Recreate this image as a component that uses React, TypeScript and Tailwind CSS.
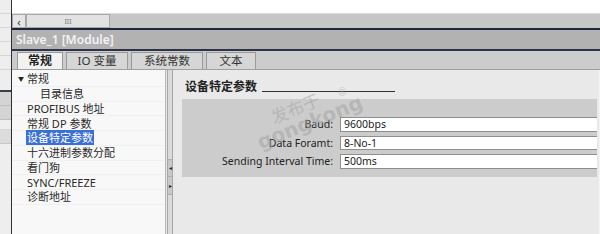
import React from "react";

const treeItems = [
  { label: "常规", indent: false, caret: true },
  { label: "目录信息", indent: true },
  { label: "PROFIBUS 地址" },
  { label: "常规 DP 参数" },
  { label: "设备特定参数", selected: true },
  { label: "十六进制参数分配" },
  { label: "看门狗" },
  { label: "SYNC/FREEZE" },
  { label: "诊断地址" },
];

const fields = [
  { label: "Baud:", value: "9600bps" },
  { label: "Data Foramt:", value: "8-No-1" },
  { label: "Sending Interval Time:", value: "500ms" },
];

const tabs = ["常规", "IO 变量", "系统常数", "文本"];

export default function App() {
  return (
    <div
      className="relative w-[600px] h-[234px] overflow-hidden bg-white flex text-[#222]"
      style={{ fontFamily: '"Noto Sans", "Noto Sans CJK SC", sans-serif' }}
    >
      {/* window behind, left edge */}
      <div className="w-[11px] h-full flex flex-col bg-[#eeeeee]">
        <div className="h-[14px] border-b border-[#d6d6d6]" />
        <div className="h-[14px] border-b border-[#d6d6d6]" />
        <div className="h-[14px] border-b border-[#d6d6d6]" />
        <div className="h-[14px] border-b border-[#d6d6d6]" />
        <div className="h-[14px] border-b border-[#d6d6d6]" />
        <div className="h-[22px] border-b-2 border-[#3a3f4c]" />
        <div className="h-[14px] bg-[#d4d4d4] border-b border-[#c0c0c0]" />
        <div className="h-[14px] bg-[#d4d4d4] border-b border-[#c0c0c0]" />
        <div className="h-[10px] border-b border-[#d6d6d6]" />
        <div className="h-[14px] bg-[#dcdcdc] border-b border-[#c8c8c8]" />
        <div className="flex-1" />
      </div>
      <div className="w-[1px] h-full bg-[#2a2f3a]" />

      <div className="flex-1 flex flex-col">
        <div className="h-[13px] bg-white" />
        {/* horizontal scrollbar */}
        <div className="h-[15px] bg-[#c6c6c6] flex items-stretch border-t border-[#dcdcdc]">
          <div className="w-[14px] bg-[#e6e6e6] border border-[#a8a8a8] flex items-center justify-center text-[11px] leading-none text-[#333]">
            ‹
          </div>
          <div className="w-[84px] bg-[#e2e2e2] border border-[#a8a8a8] flex items-center justify-center text-[7px] leading-none text-[#777]">
            III
          </div>
        </div>
        <div className="h-[2px] bg-[#20263a]" />
        {/* title bar */}
        <div className="h-[19px] bg-[#b2b2b2] flex items-center pl-[4px]">
          <span className="text-[12px] font-semibold text-[#f2f2f2] leading-none">
            Slave_1 [Module]
          </span>
        </div>
        <div className="h-[2px] bg-[#2c3346]" />
        {/* tabs */}
        <div className="h-[19px] bg-[#cccccc] flex items-end pl-[5px] gap-[3px] border-b border-[#a0a0a0]">
          {tabs.map((t, i) => (
            <div
              key={t}
              className={
                i === 0
                  ? "w-[46px] h-[17px] bg-[#f2f2f2] border border-b-0 border-[#9a9a9a] flex items-center justify-center text-[12px] font-bold leading-none"
                  : i === 1
                  ? "w-[62px] h-[17px] bg-[#d6d6d6] border border-b-0 border-[#9a9a9a] flex items-center justify-center text-[11.5px] text-[#333] leading-none"
                  : i === 2
                  ? "w-[72px] h-[17px] bg-[#d6d6d6] border border-b-0 border-[#9a9a9a] flex items-center justify-center text-[11.5px] text-[#333] leading-none"
                  : "w-[50px] h-[17px] bg-[#d6d6d6] border border-b-0 border-[#9a9a9a] flex items-center justify-center text-[11.5px] text-[#333] leading-none"
              }
            >
              {t}
            </div>
          ))}
        </div>

        {/* content */}
        <div className="flex-1 flex">
          {/* tree */}
          <div className="w-[154px] bg-[#f8f8f8] border-r border-[#b8b8b8] pt-[2px] flex flex-col">
            {treeItems.map((it) => (
              <div
                key={it.label}
                className="h-[14.75px] flex items-center text-[11px] leading-none border-b border-[#f0f0f0] text-[#2a2a2a]"
              >
                <span className="w-[15px] pl-[6px] text-[6px] text-[#222]">
                  {it.caret ? "▼" : ""}
                </span>
                <span
                  className={
                    it.selected
                      ? "bg-[#3a6fd8] text-white px-[1px] py-[2px] -ml-[1px]"
                      : it.indent
                      ? "pl-[13px]"
                      : ""
                  }
                >
                  {it.label}
                </span>
              </div>
            ))}
          </div>
          {/* splitter */}
          <div className="w-[8px] bg-[#e8e8e8] flex justify-center">
            <div className="w-[6px] h-full bg-[#dadada] border-x border-[#a6a6a6] flex flex-col">
              <div className="h-[89px]" />
              <div className="h-[18px] bg-[#c8c8c8] border-y border-[#b0b0b0] flex items-center justify-center text-[6px] leading-none">
                ◂
              </div>
              <div className="h-[18px] bg-[#c8c8c8] border-b border-[#b0b0b0] flex items-center justify-center text-[6px] leading-none">
                ▸
              </div>
            </div>
          </div>
          {/* parameter panel */}
          <div className="flex-1 bg-[#e9e9e9] pt-[9px] pl-[8px] pr-[2px] border-r border-[#f4f4f4]">
            <div className="flex items-center h-[16px] pl-[3px]">
              <span className="text-[12px] font-bold leading-none">设备特定参数</span>
              <div className="ml-[5px] mt-[8px] w-[133px] h-[1px] bg-[#333]" />
            </div>
            <div className="mt-[4px] bg-[#cccccc] h-[78px] pt-[18px] flex flex-col gap-[4px]">
              {fields.map((f) => (
                <div key={f.label} className="flex items-center h-[14.5px]">
                  <span className="w-[151px] text-right text-[10.5px] leading-none text-[#222]">
                    {f.label}
                  </span>
                  <div className="ml-[7px] flex-1 h-[14.5px] bg-white border border-[#8e8e8e] border-r-0 flex items-center pl-[3px] text-[10.5px] leading-none">
                    {f.value}
                  </div>
                </div>
              ))}
            </div>
          </div>
        </div>
      </div>

      {/* watermark */}
      <div className="absolute left-[270px] top-[100px] -rotate-[22deg] text-[#a0a0a0]/50 text-[17px] leading-none pointer-events-none">
        发布于
      </div>
      <div
        className="absolute left-[254px] top-[112px] -rotate-[22deg] text-[#a0a0a0]/50 text-[20px] font-semibold leading-none pointer-events-none"
        style={{ fontFamily: '"DejaVu Sans", sans-serif' }}
      >
        gongkong
      </div>
      <div className="absolute left-[338px] top-[87px] text-[#a0a0a0]/50 text-[10px] leading-none pointer-events-none">
        ®
      </div>
    </div>
  );
}
